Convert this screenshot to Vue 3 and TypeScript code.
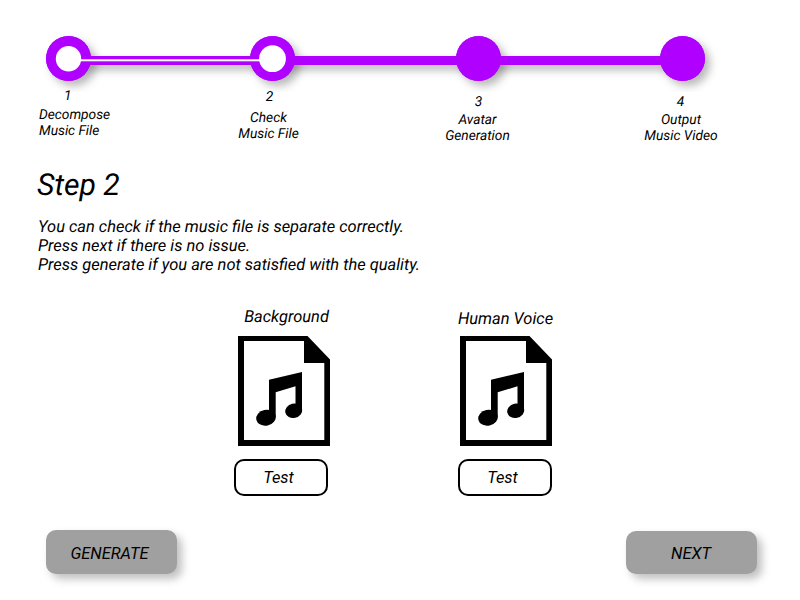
<script setup lang="ts">
interface Step {
  id: number
  lines: [string, string]
  cx: number
  hole: number
}

const steps: Step[] = [
  { id: 1, lines: ['Decompose', 'Music File'], cx: 68.5, hole: 12.7 },
  { id: 2, lines: ['Check', 'Music File'], cx: 272.5, hole: 13.4 },
  { id: 3, lines: ['Avatar', 'Generation'], cx: 478.5, hole: 0 },
  { id: 4, lines: ['Output', 'Music Video'], cx: 682.5, hole: 0 },
]

const tracks = ['Background', 'Human Voice']
</script>

<template>
  <main class="page">
    <svg class="progress" width="800" height="92" viewBox="0 0 800 92">
      <circle v-for="s in steps" :key="s.id" class="shadowed" :cx="s.cx" cy="58.5" r="22.5" />
      <rect class="shadowed" x="80" y="56" width="600" height="9" />
      <circle v-for="s in steps" :key="s.id" class="disc" :cx="s.cx" cy="58.5" r="22.5" />
      <circle v-for="s in steps" :key="s.id" class="hole" :cx="s.cx" cy="58.7" :r="s.hole" />
      <rect class="done" x="80" y="59.3" width="180" height="2" />
    </svg>

    <ol class="labels">
      <li v-for="s in steps" :key="s.id" :class="['label', 'label-' + s.id]">
        <span class="num">{{ s.id }}</span>
        <span class="name">{{ s.lines[0] }}<br />{{ s.lines[1] }}</span>
      </li>
    </ol>

    <h1 class="title">Step 2</h1>
    <p class="intro">
      You can check if the music file is separate correctly.<br />
      Press next if there is no issue.<br />
      Press generate if you are not satisfied with the quality.
    </p>

    <section class="tracks">
      <div v-for="(t, i) in tracks" :key="t" :class="['track', 'track-' + i]">
        <span class="track-name">{{ t }}</span>
        <svg class="file" width="92" height="110" viewBox="0 0 92 110">
          <path fill-rule="evenodd" d="M0 0H69.5L92 23.5V110H0ZM6 5V104H86.3V27H66V5Z" />
          <path d="M31 43.8L64 36V75H57.5V50.3L37.7 56.3V81.5H31Z" />
          <ellipse cx="28" cy="81.7" rx="9.9" ry="7.9" transform="rotate(-12 28 81.7)" />
          <ellipse cx="55.7" cy="74.8" rx="8.6" ry="7.1" transform="rotate(-12 55.7 74.8)" />
        </svg>
        <button class="test">Test</button>
      </div>
    </section>

    <footer class="actions">
      <button class="action generate">GENERATE</button>
      <button class="action next">NEXT</button>
    </footer>
  </main>
</template>

<style>
body {
  background: #fff;
}
</style>

<style scoped>
.page {
  width: 800px;
  height: 600px;
  overflow: hidden;
  display: flex;
  flex-direction: column;
  background: #fff;
  color: #000;
  font-family: Roboto, sans-serif;
  font-style: italic;
  font-weight: 400;
  font-size: 16.46px;
  line-height: 19px;
  text-rendering: geometricPrecision;
}
.progress {
  display: block;
  flex: none;
}
.shadowed {
  fill: #b000ff;
  filter: drop-shadow(5px 5px 4px rgba(0, 0, 0, 0.28));
}
.disc {
  fill: #b000ff;
}
.hole,
.done {
  fill: #fff;
}
.labels {
  list-style: none;
  margin: 0;
  padding: 0 0 0 39px;
  height: 75px;
  display: grid;
  grid-template-columns: 126px 207px 211px 195px;
  font-size: 13.75px;
  line-height: 16px;
}
.label {
  display: flex;
  flex-direction: column;
  text-align: center;
}
.label-1 {
  text-align: left;
}
.label-1 .num {
  padding-left: 25px;
}
.label-1 .name {
  padding-top: 3px;
}
.label-1,
.label-2 {
  margin-top: -4px;
}
.label-2 .num {
  padding: 1px 0 0 2px;
}
.label-2 .name {
  padding-top: 5px;
}
.label-3,
.label-4 {
  padding-top: 2px;
}
.label-3 .num {
  padding-left: 2px;
}
.label-3 .name,
.label-4 .name {
  padding-top: 2px;
}
.label-4 .name {
  padding-left: 1px;
}
.title {
  margin: 1px 0 0 37px;
  font-size: 30.2px;
  line-height: 36px;
  font-weight: inherit;
}
.intro {
  margin: 14px 0 0 38px;
}
.tracks {
  display: flex;
  gap: 130px;
  margin: 33px 0 0 234px;
}
.track {
  width: 94px;
  display: flex;
  flex-direction: column;
  align-items: center;
}
.track-name {
  height: 28px;
  white-space: nowrap;
}
.track-0 .track-name {
  padding-left: 11px;
}
.track-1 .track-name {
  padding: 2px 0 0 1px;
  height: 26px;
}
.file {
  display: block;
}
.track-0 .file {
  margin-left: 6px;
}
.track-1 .file {
  margin-left: 2px;
}
.test {
  width: 94px;
  height: 37px;
  margin-top: 13px;
  padding: 0 5px 0 0;
  border: 2px solid #000;
  border-radius: 10px;
  background: #fff;
  color: #000;
  font: inherit;
}
.actions {
  display: flex;
  justify-content: space-between;
  align-items: flex-end;
  margin: 34px 43px 0 46px;
}
.action {
  width: 131px;
  height: 44px;
  padding: 2px 4px 0 0;
  border: 0;
  border-radius: 10px;
  background: #a0a0a0;
  color: #000;
  font: inherit;
  box-shadow: 5px 5px 8px rgba(0, 0, 0, 0.25);
}
.next {
  height: 43px;
  padding: 1px 1px 0 0;
}
</style>
